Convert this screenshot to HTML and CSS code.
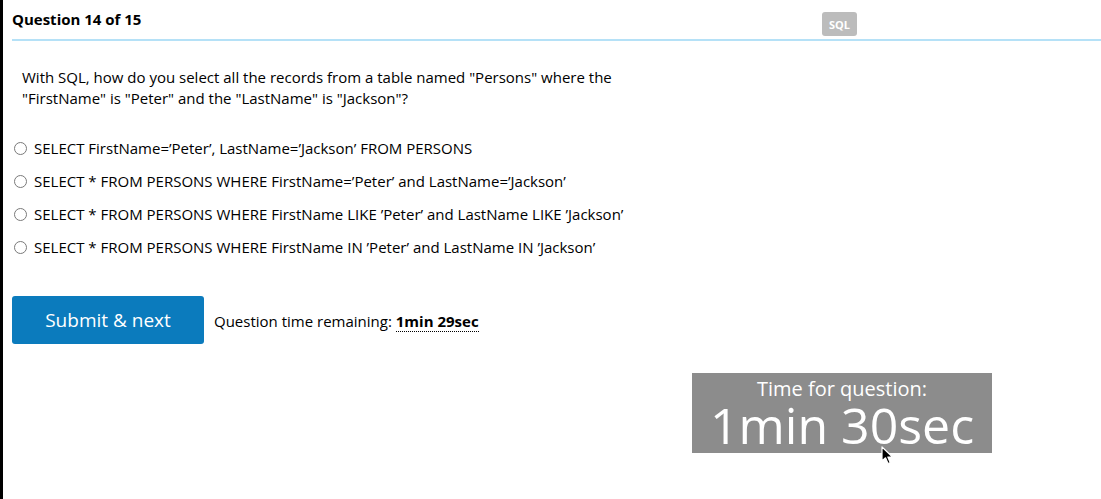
FILE: index.html
```html
<!DOCTYPE html>
<html lang="en">
<head>
<meta charset="utf-8">
<title>Question 14 of 15</title>
<link rel="stylesheet" href="styles.css">
</head>
<body>
<div class="frame">
  <main class="quiz">
    <header class="quiz-head">
      <h1 class="quiz-title">Question 14 of 15</h1>
      <span class="tag">SQL</span>
    </header>

    <p class="question">With SQL, how do you select all the records from a table named "Persons" where the "FirstName" is "Peter" and the "LastName" is "Jackson"?</p>

    <ul class="options">
      <li class="option"><span class="radio"></span><span>SELECT FirstName=’Peter’, LastName=’Jackson’ FROM PERSONS</span></li>
      <li class="option"><span class="radio"></span><span>SELECT * FROM PERSONS WHERE FirstName=’Peter’ and LastName=’Jackson’</span></li>
      <li class="option"><span class="radio"></span><span>SELECT * FROM PERSONS WHERE FirstName LIKE ’Peter’ and LastName LIKE ’Jackson’</span></li>
      <li class="option"><span class="radio"></span><span>SELECT * FROM PERSONS WHERE FirstName IN ’Peter’ and LastName IN ’Jackson’</span></li>
    </ul>

    <div class="actions">
      <button class="submit" type="button">Submit &amp; next</button>
      <span class="remaining">Question time remaining: <b class="remaining-value">1min 29sec</b></span>
    </div>

    <div class="timer-row">
      <div class="timer">
        <div class="timer-label">Time for question:</div>
        <div class="timer-value">1min 30sec</div>
        <svg class="cursor" width="14" height="20" viewBox="0 0 14 20" aria-hidden="true">
          <path d="M1 1 L1 15 L4.5 11.8 L7 17.5 L9.2 16.6 L6.8 11 L11.5 11 Z" fill="#000" stroke="#fff" stroke-width="1.2" stroke-linejoin="round"/>
        </svg>
      </div>
    </div>
  </main>
</div>
</body>
</html>
```

FILE: styles.css
```css
* { box-sizing: border-box; }

html, body {
  margin: 0;
  padding: 0;
  background: #fff;
}

body {
  font-family: "Open Sans", "Liberation Sans", sans-serif;
  color: #000;
}

.frame {
  min-height: 499px;
  border-left: 3px solid #000;
  padding-left: 9px;
}

.quiz {
  display: flex;
  flex-direction: column;
}

.quiz-head {
  display: flex;
  align-items: flex-start;
  height: 41px;
  border-bottom: 2px solid #b5e1f7;
}

.quiz-title {
  margin: 0;
  padding-top: 6px;
  font-size: 15px;
  line-height: 26px;
  font-weight: 700;
  color: #000;
}

.tag {
  margin-left: auto;
  margin-right: 244px;
  margin-top: 12px;
  width: 35px;
  height: 24px;
  display: flex;
  align-items: center;
  justify-content: center;
  background: #bcbcbc;
  border-radius: 3px;
  color: #fff;
  font-size: 11px;
  font-weight: 700;
}

.question {
  margin: 26px 0 0 10px;
  max-width: 620px;
  font-size: 15px;
  line-height: 21px;
  color: #000;
}

.options {
  list-style: none;
  margin: 29px 0 0 0;
  padding: 0;
  display: flex;
  flex-direction: column;
  gap: 12px;
}

.option {
  display: flex;
  align-items: center;
  gap: 7px;
  font-size: 15px;
  line-height: 21px;
  color: #000;
}

.radio {
  width: 13px;
  height: 13px;
  margin-left: 2px;
  border-radius: 50%;
  border: 1px solid #7a7a7a;
  background: #fff;
  flex: none;
}

.actions {
  display: flex;
  align-items: baseline;
  gap: 10px;
  margin-top: 38px;
}

.submit {
  width: 192px;
  height: 48px;
  border: 0;
  border-radius: 3px;
  background: #0b7bbd;
  color: #fff;
  font-family: inherit;
  font-size: 19px;
  line-height: 48px;
  padding: 0;
  cursor: pointer;
}

.remaining {
  font-size: 15px;
  line-height: 21px;
  color: #000;
}

.remaining-value {
  font-weight: 700;
  border-bottom: 1px dotted #000;
}

.timer-row {
  display: flex;
  margin-top: 29px;
  padding-left: 680px;
}

.timer {
  position: relative;
  width: 300px;
  height: 80px;
  background: #8c8c8c;
  color: #fff;
  text-align: center;
  display: flex;
  flex-direction: column;
  align-items: center;
}

.timer-label {
  font-size: 20px;
  line-height: 24px;
  margin-top: 4px;
}

.timer-value {
  font-size: 50px;
  line-height: 48px;
}

.cursor {
  position: absolute;
  left: 189px;
  top: 73px;
}
```
